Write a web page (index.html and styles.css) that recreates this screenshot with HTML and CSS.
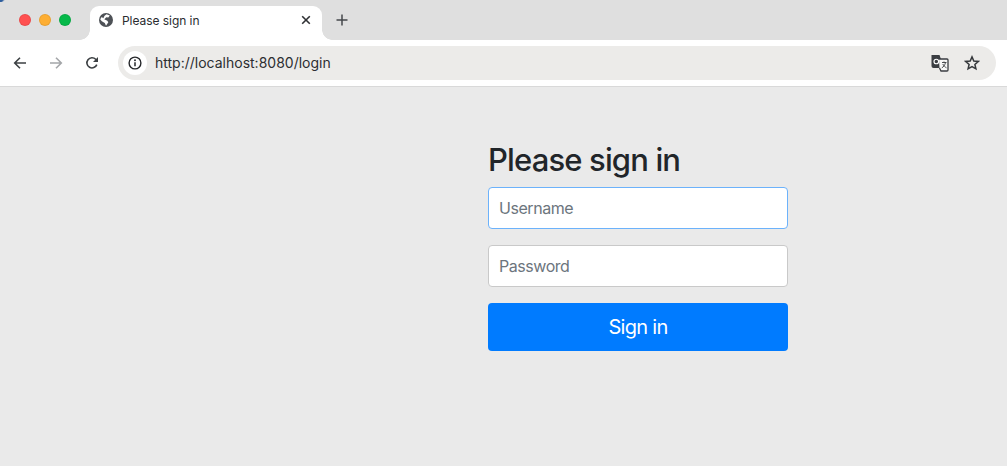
FILE: index.html
```html
<!DOCTYPE html>
<html lang="en">
<head>
<meta charset="utf-8">
<title>Please sign in</title>
<link rel="stylesheet" href="styles.css">
</head>
<body>
<header class="browser">
  <div class="tabstrip">
    <div class="lights">
      <span class="light light-red"></span>
      <span class="light light-amber"></span>
      <span class="light light-green"></span>
    </div>
    <div class="tab">
      <svg class="tab-globe" width="16" height="16" viewBox="0 0 16 16">
        <circle cx="8" cy="8" r="7" fill="#4d5156"/>
        <path d="M8.500 2.200 11.800 3.600 10.300 5.500 8.300 5.300 6.300 7.200 9.300 8.800 10.300 10.300 8 13.800 6.800 11 3.800 9.200 2.200 7.200 3.700 5 5.300 6.300 6.600 3.800Z" fill="#fff"/>
      </svg>
      <span class="tab-title">Please sign in</span>
      <svg class="tab-close" width="10" height="10" viewBox="0 0 10 10">
        <path d="M1.200 1.200 8.800 8.800M8.800 1.200 1.200 8.800" stroke="#2f3134" stroke-width="1.600" fill="none"/>
      </svg>
    </div>
    <svg class="new-tab" width="12" height="12" viewBox="0 0 12 12">
      <path d="M6 .5V11.500M.5 6H11.500" stroke="#45484c" stroke-width="1.500" fill="none"/>
    </svg>
  </div>
  <div class="toolbar">
    <svg class="nav-icon" width="14" height="14" viewBox="0 0 14 14">
      <path d="M13 7H1.800M7 1.700 1.700 7 7 12.300" stroke="#3c4043" stroke-width="1.600" fill="none"/>
    </svg>
    <svg class="nav-icon" width="14" height="14" viewBox="0 0 14 14">
      <path d="M1 7H12.200M7 1.700 12.300 7 7 12.300" stroke="#a4a6a9" stroke-width="1.600" fill="none"/>
    </svg>
    <svg class="nav-icon" width="14" height="14" viewBox="0 0 14 14">
      <path d="M11.800 8.600A5.100 5.100 0 1 1 10.700 3.300L12.300 4.800" stroke="#3c4043" stroke-width="1.600" fill="none"/>
      <path d="M13 1V6H8Z" fill="#3c4043"/>
    </svg>
    <div class="omnibox">
      <span class="site-info">
        <svg width="14" height="14" viewBox="0 0 14 14">
          <circle cx="7" cy="7" r="5.900" stroke="#25272a" stroke-width="1.400" fill="none"/>
          <path d="M7 6.300V10.300" stroke="#25272a" stroke-width="1.500"/>
          <circle cx="7" cy="4.300" r=".95" fill="#25272a"/>
        </svg>
      </span>
      <span class="url">http://localhost:8080/login</span>
      <svg class="translate" width="18" height="18" viewBox="0 0 18 18">
        <path d="M.5 1H8.500L13 14H2.500A2 2 0 0 1 .5 12Z" fill="#3a3d41"/>
        <path d="M8 5H16A1 1 0 0 1 17 6V16A1 1 0 0 1 16 17H10L8.500 14" fill="#f7f7f6" stroke="#3a3d41" stroke-width="1.300"/>
        <circle cx="5.300" cy="7.500" r="2.300" fill="none" stroke="#fff" stroke-width="1.100"/>
        <path d="M11 8.500H15.500M13 7.500V8.500M14.500 8.500C14 11 12.500 13 10.800 13.800M11.800 10C12.500 11.500 14 13 15.500 13.800" fill="none" stroke="#3a3d41" stroke-width=".9"/>
      </svg>
      <svg class="star" width="16" height="16" viewBox="0 0 16 16">
        <path d="M8 1.900 9.800 6 14.300 6.400 10.900 9.400 11.900 13.800 8 11.500 4.100 13.800 5.100 9.400 1.700 6.400 6.200 6Z" fill="none" stroke="#35383b" stroke-width="1.500" stroke-linejoin="miter"/>
      </svg>
    </div>
  </div>
</header>
<main class="page">
  <form class="signin">
    <h1 class="signin-title">Please sign in</h1>
    <input class="field field-focus" type="text" placeholder="Username">
    <input class="field" type="password" placeholder="Password">
    <button class="submit" type="button">Sign in</button>
  </form>
</main>
</body>
</html>
```
FILE: styles.css
```css
* { box-sizing: border-box; }
html, body { height: 100%; }
body {
  margin: 0;
  display: flex;
  flex-direction: column;
  overflow: hidden;
  background: #eaeaea;
  font-family: Inter, "Liberation Sans", sans-serif;
}
.tabstrip {
  position: relative;
  height: 40px;
  display: flex;
  align-items: flex-end;
  background: #dfdfdf;
}
.tabstrip::before {
  content: "";
  position: absolute;
  left: 0;
  top: 0;
  width: 5px;
  height: 2px;
  background: linear-gradient(135deg, #2f5f9e 40%, #dfdfdf 75%);
}
.lights {
  display: flex;
  gap: 8px;
  align-self: flex-start;
  padding: 14px 0 0 19px;
  width: 90px;
}
.light {
  width: 12px;
  height: 12px;
  border-radius: 50%;
  border: 1px solid rgba(0, 0, 0, .08);
}
.light-red { background: #ff5050; }
.light-amber { background: #fdae33; }
.light-green { background: #06b94a; }
.tab {
  position: relative;
  width: 232px;
  height: 34px;
  padding: 0 11px 6px 8px;
  display: flex;
  align-items: center;
  background: #fff;
  border-radius: 9px 9px 0 0;
}
.tab::before,
.tab::after {
  content: "";
  position: absolute;
  bottom: 0;
  width: 10px;
  height: 10px;
}
.tab::before {
  left: -10px;
  background: radial-gradient(circle at 0 0, transparent 9.5px, #fff 10px);
}
.tab::after {
  right: -10px;
  background: radial-gradient(circle at 100% 0, transparent 9.5px, #fff 10px);
}
.tab-title {
  flex: 1;
  margin-left: 8px;
  font-size: 12px;
  letter-spacing: -.05px;
  color: #2a2c2f;
}
.new-tab { align-self: center; margin: 0 0 0 14px; }
.toolbar {
  height: 47px;
  padding: 0 11px 1px 13px;
  display: flex;
  align-items: center;
  gap: 22px;
  background: #fff;
  border-bottom: 1px solid #d9d9d9;
}
.nav-icon { flex: none; }
.omnibox {
  flex: 1;
  height: 34px;
  margin-left: -3px;
  padding: 0 16px 0 5px;
  display: flex;
  align-items: center;
  background: #ecebe9;
  border-radius: 17px;
}
.site-info {
  width: 24px;
  height: 24px;
  display: flex;
  align-items: center;
  justify-content: center;
  background: #fff;
  border-radius: 50%;
}
.url {
  flex: 1;
  margin-left: 8px;
  font-size: 14px;
  color: #2c2e31;
}
.translate { margin-right: 15px; }
.page {
  flex: 1;
  padding: 53px 0 0 488px;
}
.signin {
  width: 300px;
  display: flex;
  flex-direction: column;
  gap: 16px;
}
.signin-title {
  margin: 0 0 -8px;
  font-size: 31px;
  line-height: 39px;
  font-weight: 500;
  color: #212529;
  letter-spacing: -.85px;
}
.field {
  height: 42px;
  padding: 0 10px;
  border: 1px solid #c9c9c9;
  border-radius: 4px;
  background: #fff;
  font: 16px Inter, "Liberation Sans", sans-serif;
  letter-spacing: -.45px;
  outline: none;
}
.field::placeholder { color: #6c757d; opacity: 1; }
.field-focus { border-color: #6cb2fb; }
.submit {
  height: 48px;
  border: 0;
  border-radius: 4px;
  background: #007bff;
  color: #fff;
  font: 20px Inter, "Liberation Sans", sans-serif;
  letter-spacing: -.7px;
}
```
